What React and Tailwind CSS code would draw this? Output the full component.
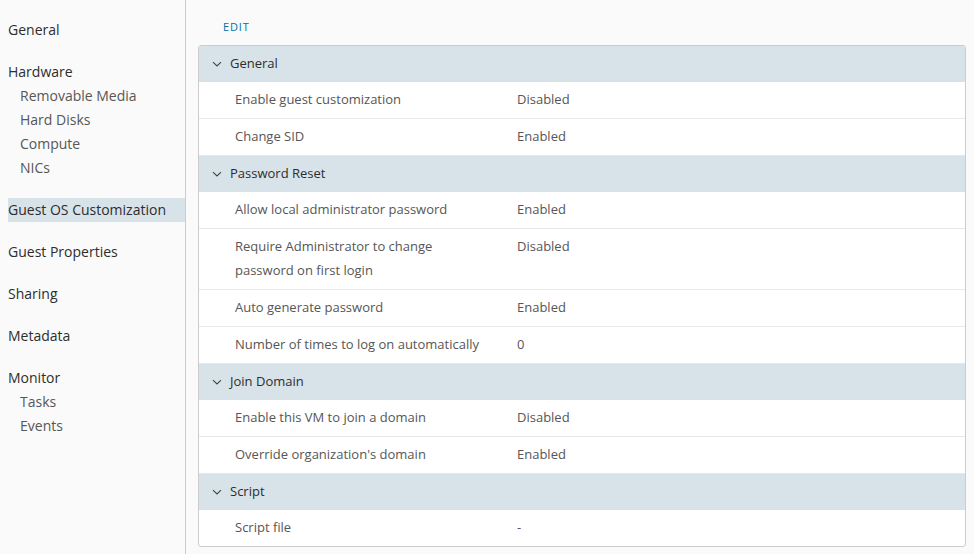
import React from "react";

const nav = [
  { title: "General" },
  { title: "Hardware", children: ["Removable Media", "Hard Disks", "Compute", "NICs"] },
  { title: "Guest OS Customization", active: true },
  { title: "Guest Properties" },
  { title: "Sharing" },
  { title: "Metadata" },
  { title: "Monitor", children: ["Tasks", "Events"] },
];

const sections = [
  { title: "General", rows: [["Enable guest customization", "Disabled"], ["Change SID", "Enabled"]] },
  {
    title: "Password Reset",
    rows: [
      ["Allow local administrator password", "Enabled"],
      ["Require Administrator to change password on first login", "Disabled"],
      ["Auto generate password", "Enabled"],
      ["Number of times to log on automatically", "0"],
    ],
  },
  { title: "Join Domain", rows: [["Enable this VM to join a domain", "Disabled"], ["Override organization's domain", "Enabled"]] },
  { title: "Script", rows: [["Script file", "-"]] },
];

function Chevron() {
  return (
    <svg width="10" height="10" viewBox="0 0 10 10" className="shrink-0">
      <path d="M1 3.2 L5 7 L9 3.2" fill="none" stroke="#444" strokeWidth="1.1" />
    </svg>
  );
}

export default function App() {
  return (
    <div className="flex w-[974px] h-[554px] bg-[#fafafa] overflow-hidden" style={{ fontFamily: "'Open Sans', 'Noto Sans', sans-serif" }}>
      <aside className="w-[186px] shrink-0 border-r border-[#cccccc] pt-[18px] pl-2">
        {nav.map((g, i) => (
          <div key={g.title} className={i > 0 ? "mt-[18px]" : ""}>
            <div className={`h-6 leading-6 text-[14px] text-[#2d2d2d] ${g.active ? "bg-[#d8e3e9]" : ""}`}>{g.title}</div>
            {g.children &&
              g.children.map((c) => (
                <div key={c} className="h-6 leading-6 pl-3 text-[14px] text-[#565656]">{c}</div>
              ))}
          </div>
        ))}
      </aside>
      <main className="flex-1 pl-3 pr-2">
        <div className="h-[45px] pl-[25px] pt-[19px] text-[11px] leading-4 tracking-[0.08em] text-[#0072a3]">EDIT</div>
        <div className="border border-[#cccccc] rounded-[3px] bg-white overflow-hidden">
          {sections.map((s, si) => (
            <div key={s.title}>
              <div className="h-9 flex items-center gap-[8px] pl-[13px] bg-[#d8e3e9] text-[13px] text-[#2d2d2d]">
                <Chevron />
                <span>{s.title}</span>
              </div>
              {s.rows.map((r, ri) => (
                <div
                  key={r[0]}
                  className={`flex pt-[5px] pb-[7px] text-[13px] leading-6 text-[#565656] ${si === sections.length - 1 && ri === s.rows.length - 1 ? "" : "border-b border-[#e8e8e8]"}`}
                >
                  <div className="w-[318px] pl-9 pr-[30px]">{r[0]}</div>
                  <div>{r[1]}</div>
                </div>
              ))}
            </div>
          ))}
        </div>
      </main>
    </div>
  );
}
